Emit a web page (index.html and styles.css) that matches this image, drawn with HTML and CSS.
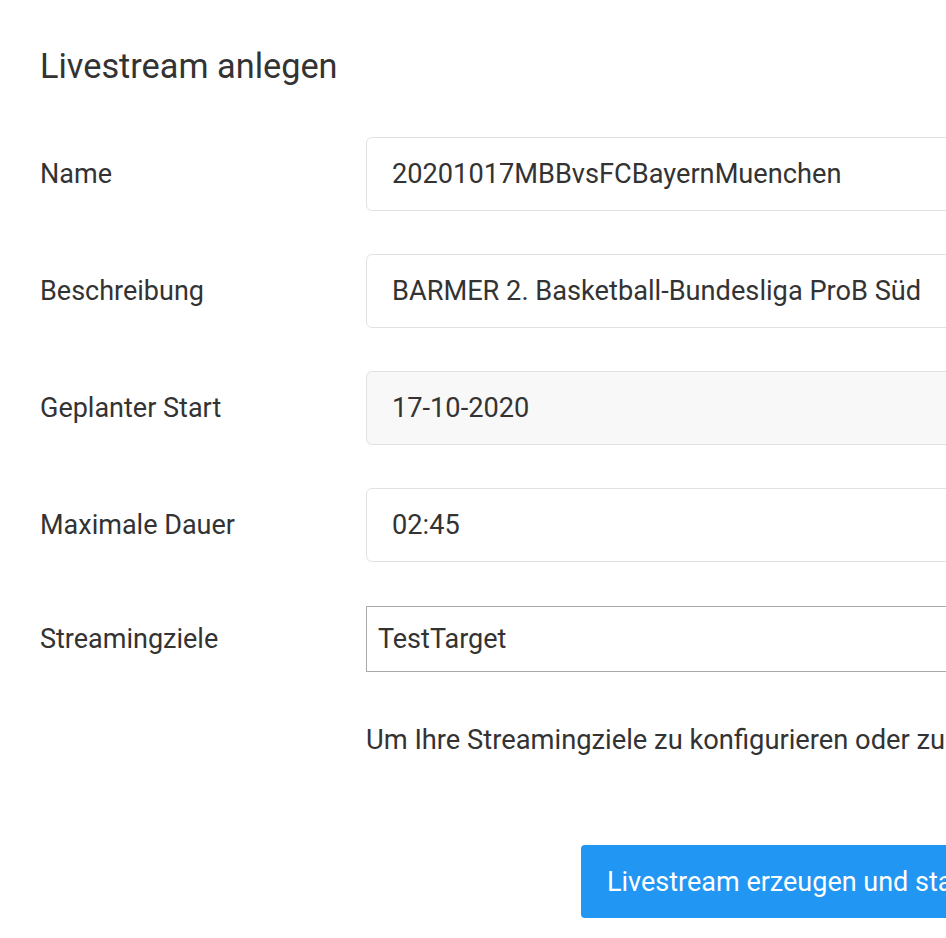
FILE: index.html
```html
<!DOCTYPE html>
<html lang="de">
<head>
<meta charset="utf-8">
<title>Livestream anlegen</title>
<link rel="stylesheet" href="styles.css">
</head>
<body>
<div class="page">
  <h1 class="title">Livestream anlegen</h1>
  <form class="form">
    <label class="label">Name</label>
    <div class="field">20201017MBBvsFCBayernMuenchen</div>
    <label class="label">Beschreibung</label>
    <div class="field">BARMER 2. Basketball-Bundesliga ProB Süd</div>
    <label class="label">Geplanter Start</label>
    <div class="field field-disabled">17-10-2020</div>
    <label class="label">Maximale Dauer</label>
    <div class="field">02:45</div>
    <label class="label">Streamingziele</label>
    <div class="select">TestTarget</div>
    <div class="spacer"></div>
    <p class="help">Um Ihre Streamingziele zu konfigurieren oder zu ändern, besuchen Sie die Einstellungen.</p>
  </form>
  <div class="actions">
    <button class="btn" type="button">Livestream erzeugen und starten</button>
  </div>
</div>
</body>
</html>
```

FILE: styles.css
```css
html, body {
  margin: 0;
  padding: 0;
  background: #ffffff;
  overflow: hidden;
}
body {
  font-family: Roboto, "Liberation Sans", sans-serif;
  color: #333333;
}
.page {
  width: 1500px;
  padding: 0 0 0 40px;
}
.title {
  font-size: 34.3px;
  font-weight: 400;
  line-height: 40px;
  margin: 46px 0 0 0;
  color: #333333;
}
.form {
  display: grid;
  grid-template-columns: 326px 1fr;
  row-gap: 43px;
  align-items: center;
  margin-top: 51px;
}
.label {
  font-size: 27px;
  line-height: 30px;
  color: #333333;
}
.field {
  height: 72px;
  border: 1px solid #e2e2e2;
  border-radius: 6px;
  padding: 0 25px;
  display: flex;
  align-items: center;
  font-size: 27.2px;
  color: #333333;
  background: #ffffff;
}
.field-disabled {
  background: #f8f8f8;
}
.select {
  height: 64px;
  border: 1px solid #a9a9a9;
  padding: 0 11px;
  display: flex;
  align-items: center;
  font-size: 27px;
  color: #333333;
  margin-top: 1px;
}
.help {
  margin: 6px 0 0 0;
  font-size: 27.3px;
  line-height: 38px;
  white-space: nowrap;
  color: #333333;
}
.actions {
  margin-top: 86px;
  padding-left: 541px;
}
.btn {
  height: 73px;
  padding: 0 26px;
  border: none;
  border-radius: 4px;
  background: #2196f3;
  color: #ffffff;
  font-family: Roboto, "Liberation Sans", sans-serif;
  font-size: 27px;
  white-space: nowrap;
}
```
